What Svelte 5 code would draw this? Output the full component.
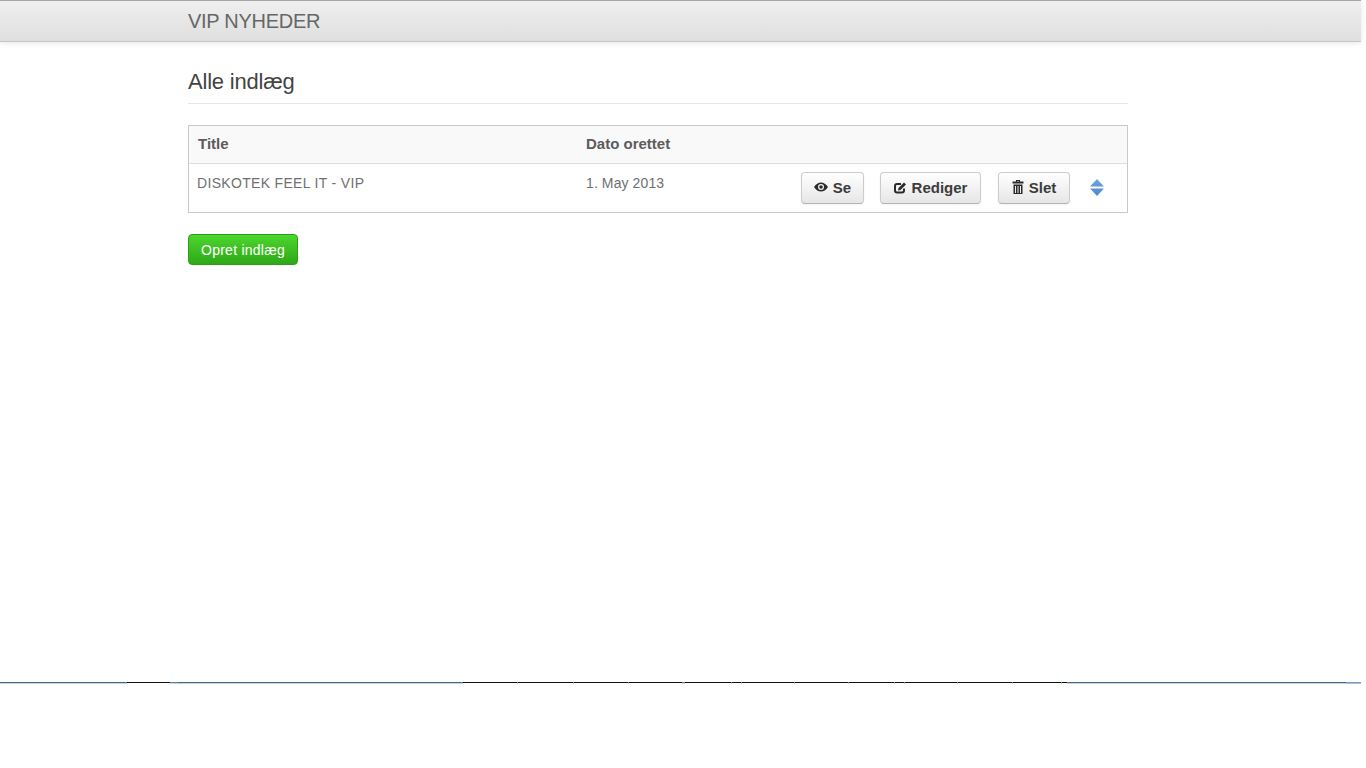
<script lang="ts">
	// Strip at the bottom of the page: [width, kind]
	const stripSegments: [number, string][] = [
		[126, 'blue'], [1, 'tick'], [43, 'black'], [8, 'tick'], [284, 'blue'], [1, 'tick'],
		[54, 'black'], [1, 'tick'], [55, 'black'], [1, 'tick'], [54, 'black'], [1, 'tick'],
		[53, 'black'], [3, 'tick'], [46, 'black'], [1, 'tick'], [9, 'black'], [1, 'tick'],
		[52, 'black'], [1, 'tick'], [53, 'black'], [1, 'tick'], [45, 'black'], [1, 'tick'],
		[9, 'black'], [1, 'tick'], [52, 'black'], [1, 'tick'], [54, 'black'], [1, 'tick'],
		[48, 'black'], [1, 'tick'], [5, 'black'], [1, 'tick'], [278, 'blue'], [15, 'light']
	];
</script>

<div class="page">
	<header class="navbar">
		<div class="container">
			<span class="brand">VIP NYHEDER</span>
		</div>
	</header>

	<main class="container">
		<h1>Alle indlæg</h1>

		<table>
			<thead>
				<tr>
					<th class="title-col">Title</th>
					<th class="date-col">Dato orettet</th>
					<th></th>
				</tr>
			</thead>
			<tbody>
				<tr>
					<td class="title-cell">DISKOTEK FEEL IT - VIP</td>
					<td class="date-cell">1. May 2013</td>
					<td class="actions">
						<button class="btn see">
							<svg width="14" height="10" viewBox="0 0 14 10">
								<path fill-rule="evenodd" fill="#2b2b2b" d="M0 5C2 2 4.300 .5 7 .5S12 2 14 5c-2 3-4.300 4.500-7 4.500S2 8 0 5zm7-3a3 3 0 1 0 0 6 3 3 0 0 0 0-6z" />
								<circle cx="7" cy="5" r="1.800" fill="#2b2b2b" />
							</svg>
							Se
						</button>
						<button class="btn edit">
							<svg width="13" height="13" viewBox="0 0 13 13">
								<path fill="none" stroke="#2b2b2b" stroke-width="2" d="M10 7.500V9.500a2 2 0 0 1-2 2H3a2 2 0 0 1-2-2V5a2 2 0 0 1 2-2h4" />
								<path fill="#2b2b2b" d="M4.500 7 10 1.500l2 2-5.500 5.500-2.500.5z" />
							</svg>
							Rediger
						</button>
						<button class="btn delete">
							<svg width="12" height="14" viewBox="0 0 12 14">
								<path fill="#2b2b2b" d="M4 0h4v1.500h3.500v2H.5v-2H4zM5 1v.5h2V1zM1.500 4.500h9V14h-9z" />
								<path stroke="#f0f0f0" d="M3.500 6v7M6 6v7M8.500 6v7" />
							</svg>
							Slet
						</button>
						<svg class="sort" width="14" height="17" viewBox="0 0 14 17">
							<defs>
								<linearGradient id="sortFill" x1="0" y1="0" x2="0" y2="1">
									<stop offset="0" stop-color="#6fa3dd" />
									<stop offset="1" stop-color="#4f88cf" />
								</linearGradient>
							</defs>
							<path fill="url(#sortFill)" d="M7 0l7 7.500H0zM0 9.500h14L7 17z" />
						</svg>
					</td>
				</tr>
			</tbody>
		</table>

		<button class="btn-create">Opret indlæg</button>
	</main>
</div>

<div class="strip">
	{#each stripSegments as [width, kind]}
		<span class={kind} style="width: {width}px"></span>
	{/each}
</div>

<style>
	:global(body) {
		background: #fff;
		font-family: 'Liberation Sans', Arial, sans-serif;
		color: #707070;
	}

	.page {
		width: 1361px;
		height: 682px;
	}

	.navbar {
		height: 42px;
		box-sizing: border-box;
		border-top: 1px solid #a6a6a6;
		border-bottom: 1px solid #c6c6c6;
		background: linear-gradient(#efefef, #dfdfdf);
		box-shadow: 0 1px 6px rgba(0, 0, 0, 0.1);
	}

	.container {
		width: 940px;
		margin: 0 auto 0 188px;
	}

	.brand {
		display: block;
		font-size: 20px;
		letter-spacing: -0.28px;
		line-height: 41px;
		color: #666;
	}

	h1 {
		margin: 25px 0 21px;
		padding-bottom: 7px;
		border-bottom: 1px solid #e6e6e6;
		font-size: 22px;
		letter-spacing: -0.2px;
		line-height: 29px;
		font-weight: normal;
		color: #444;
	}

	table {
		width: 940px;
		border-collapse: separate;
		border-spacing: 0;
		border: 1px solid #c9c9c9;
		font-size: 14px;
		table-layout: fixed;
	}

	th {
		height: 38px;
		padding: 0 0 2px 9px;
		background: #f9f9f9;
		border-bottom: 1px solid #ddd;
		text-align: left;
		font-size: 15px;
		font-weight: bold;
		color: #5c5c5c;
		box-sizing: border-box;
	}

	.title-col {
		width: 388px;
	}

	.date-col {
		width: 200px;
		padding-left: 9px;
	}

	td {
		height: 48px;
		padding: 9px 0 0 9px;
		vertical-align: top;
		line-height: 20px;
		box-sizing: border-box;
	}

	.title-cell {
		padding-left: 8px;
		letter-spacing: 0.32px;
	}

	.date-cell {
		letter-spacing: 0.1px;
	}

	.actions {
		display: flex;
		align-items: flex-start;
		padding: 8px 0 0 0;
		white-space: nowrap;
	}

	.btn {
		display: inline-flex;
		align-items: center;
		justify-content: center;
		gap: 5px;
		height: 32px;
		padding: 0 0 2px;
		box-sizing: border-box;
		border: 1px solid #ccc;
		border-bottom-color: #b3b3b3;
		border-radius: 4px;
		background: linear-gradient(#fff, #e6e6e6);
		box-shadow: inset 0 1px 0 rgba(255, 255, 255, 0.2), 0 1px 2px rgba(0, 0, 0, 0.05);
		font-family: inherit;
		font-size: 15px;
		font-weight: bold;
		color: #3c3c3c;
	}

	.see {
		width: 63px;
		margin-left: 24px;
	}

	.edit {
		width: 101px;
		margin-left: 16px;
	}

	.delete {
		width: 72px;
		margin-left: 17px;
	}

	.sort {
		margin: 7px 0 0 20px;
	}

	.btn-create {
		display: block;
		width: 110px;
		height: 31px;
		margin-top: 21px;
		padding: 0;
		border: 1px solid #2f9e17;
		border-radius: 4px;
		background: linear-gradient(#4cd62e, #2fa818);
		font-family: inherit;
		font-size: 14px;
		letter-spacing: 0.25px;
		color: #fff;
	}

	.strip {
		display: flex;
		width: 1361px;
		height: 2px;
	}

	.strip span {
		display: block;
		height: 2px;
		flex: none;
	}

	.black {
		background: linear-gradient(#111 50%, #fff 50%);
	}

	.blue {
		background: linear-gradient(#4a6480 50%, #c3d4e2 50%);
	}

	.tick {
		background: linear-gradient(#6c8097 50%, #c3d4e2 50%);
	}

	.light {
		background: linear-gradient(#7d99b6 50%, #a8bfd4 50%);
	}
</style>
